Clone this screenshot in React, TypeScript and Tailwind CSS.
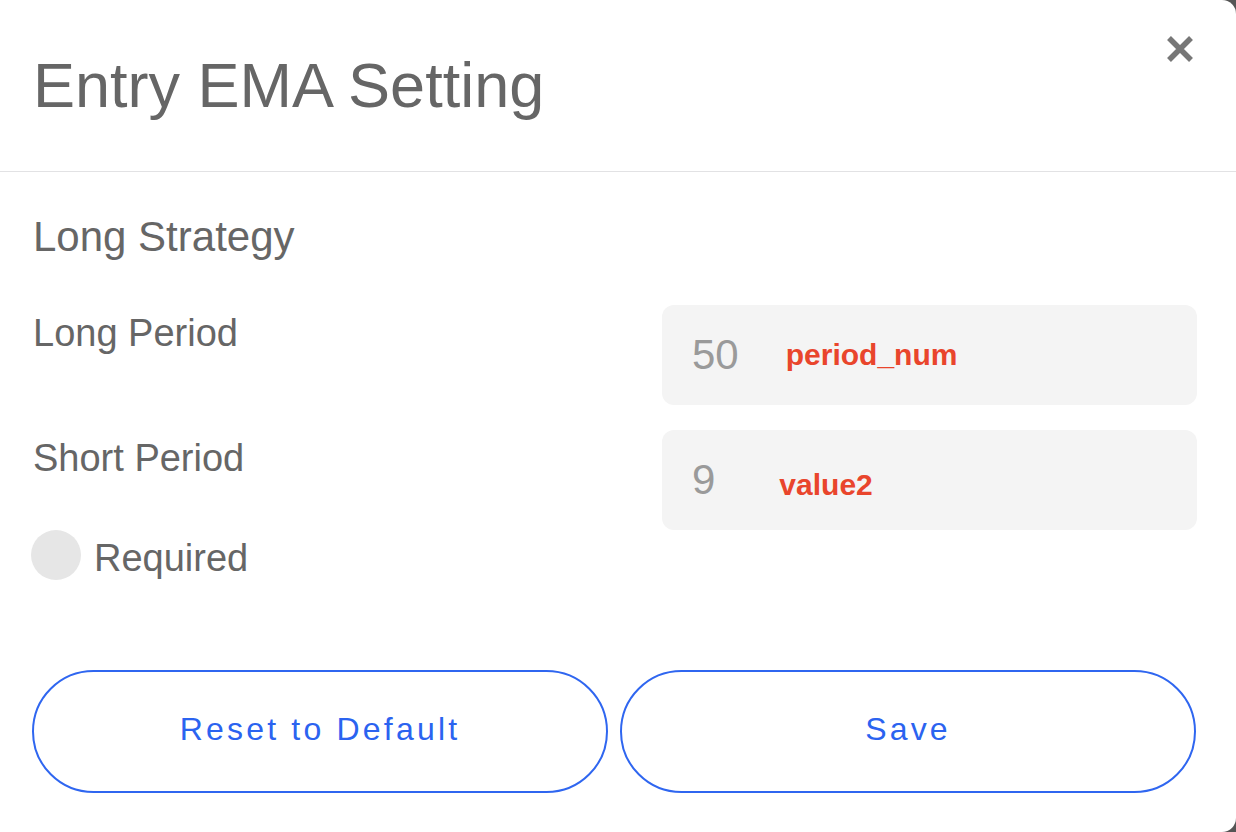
const FONT = { fontFamily: '"Liberation Sans", Arial, sans-serif' };

function CloseIcon() {
  return (
    <svg width="30" height="30" viewBox="0 0 30 30" aria-hidden="true">
      <path d="M4 4 L26 26 M26 4 L4 26" stroke="#777777" strokeWidth="5.5" strokeLinecap="butt" />
    </svg>
  );
}

const ROWS = [
  { label: "Long Period", value: "50", tag: "period_num", tagClass: "ml-[47px]" },
  { label: "Short Period", value: "9", tag: "value2", tagClass: "ml-[64px] mt-[9px]" },
];

export default function App() {
  return (
    <div className="h-[832px] w-[1236px] bg-[#555555]" style={FONT}>
      <div className="flex h-full flex-col rounded-r-[14px] bg-white">
        {/* header */}
        <div className="relative border-b border-[#e2e2e4] pl-[33px] pt-[49px] pb-[50px]">
          <h1 className="text-[63px] leading-[72px] font-normal text-[#666666]">
            Entry EMA Setting
          </h1>
          <button className="absolute right-[41px] top-[34px]">
            <CloseIcon />
          </button>
        </div>

        {/* body */}
        <div className="px-[33px] pt-[40px]">
          <h2 className="text-[42px] leading-[50px] text-[#666666]">Long Strategy</h2>

          <div className="mt-[43px] flex flex-col gap-[25px] pr-[6px]">
            {ROWS.map((r) => (
              <div key={r.label} className="flex items-start justify-between">
                <div className="pt-[5px] text-[38px] leading-[46px] text-[#666666]">{r.label}</div>
                <div className="flex h-[100px] w-[535px] items-center rounded-[12px] bg-[#f4f4f4] pl-[30px]">
                  <span className="text-[42px] leading-none text-[#9a9a9a]">{r.value}</span>
                  <span className={`${r.tagClass} text-[30px] font-bold leading-none text-[#e9452c]`}>
                    {r.tag}
                  </span>
                </div>
              </div>
            ))}
          </div>

          <div className="-ml-[2px] flex h-[50px] items-center gap-[13px]">
            <span className="h-[50px] w-[50px] rounded-full bg-[#e6e6e6]" />
            <span className="pt-[6px] text-[38px] leading-[46px] text-[#666666]">Required</span>
          </div>
        </div>

        {/* actions */}
        <div className="mt-[90px] flex gap-[12px] pl-[32px] pr-[40px]">
          {["Reset to Default", "Save"].map((t) => (
            <button
              key={t}
              className="flex h-[123px] flex-1 items-center justify-center rounded-full border-2 border-[#2f66f0] pb-[6px] text-[32px] tracking-[0.1em] text-[#2b63f0]"
            >
              {t}
            </button>
          ))}
        </div>
      </div>
    </div>
  );
}
